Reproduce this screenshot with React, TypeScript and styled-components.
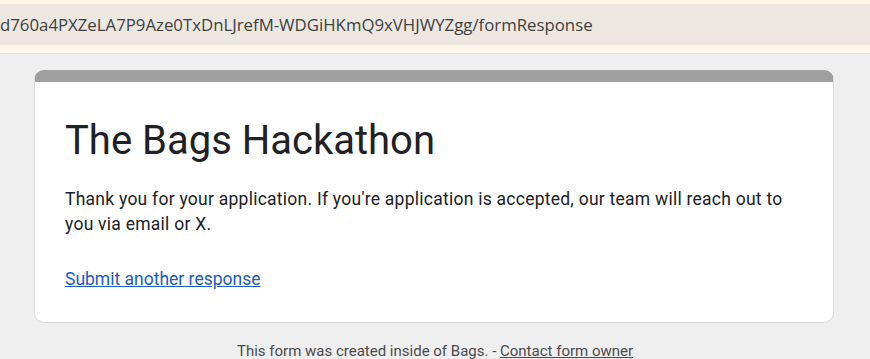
import React from "react";
import styled, { createGlobalStyle } from "styled-components";

const Global = createGlobalStyle`
  html, body { margin: 0; padding: 0; background: #efefef; }
  body { width: 870px; height: 359px; overflow: hidden; }
`;

const Page = styled.div`
  display: flex;
  flex-direction: column;
  width: 870px;
  height: 359px;
  overflow: hidden;
  background: #efefef;
`;

const AddressBand = styled.div`
  background: #fdf6e9;
  padding: 4px 0 8px 0;
  border-bottom: 1px solid #e8e2d8;
`;

const AddressBar = styled.div`
  height: 41px;
  display: flex;
  align-items: center;
  background: #ece8e1;
  font-family: "Open Sans", "Noto Sans", sans-serif;
  font-size: 16.8px;
  color: #404040;
  white-space: nowrap;
  overflow: hidden;
`;

const Main = styled.main`
  display: flex;
  flex-direction: column;
  align-items: flex-start;
  padding: 16px 0 0 34px;
`;

const Card = styled.section`
  width: 800px;
  box-sizing: border-box;
  background: #ffffff;
  border: 1px solid #dadce0;
  border-top: 12px solid #a0a0a0;
  border-radius: 10px;
  padding: 35px 30px 30px 30px;
  font-family: Roboto, "Liberation Sans", sans-serif;
`;

const Title = styled.h1`
  margin: 0;
  font-weight: 400;
  font-size: 40px;
  line-height: 48px;
  color: #202124;
`;

const Message = styled.p`
  margin: 22px 0 0 0;
  font-size: 17.5px;
  letter-spacing: 0.25px;
  line-height: 25px;
  color: #202124;
`;

const Link = styled.a`
  display: block;
  width: fit-content;
  margin-top: 30px;
  font-size: 17.5px;
  line-height: 25px;
  color: #1c5ac4;
  text-decoration: underline;
`;

const Footer = styled.footer`
  align-self: stretch;
  margin: 18px 0 0 -34px;
  text-align: center;
  font-family: Roboto, "Liberation Sans", sans-serif;
  font-size: 15px;
  line-height: 20px;
  color: #4a4a4a;
`;

const FooterLink = styled.a`
  color: #4a4a4a;
  text-decoration: underline;
`;

export default function App() {
  return (
    <>
      <Global />
      <Page>
        <AddressBand>
          <AddressBar>d760a4PXZeLA7P9Aze0TxDnLJrefM-WDGiHKmQ9xVHJWYZgg/formResponse</AddressBar>
        </AddressBand>
        <Main>
          <Card>
            <Title>The Bags Hackathon</Title>
            <Message>
              Thank you for your application. If you're application is accepted, our team will reach out to you via email or X.
            </Message>
            <Link href="#">Submit another response</Link>
          </Card>
          <Footer>
            This form was created inside of Bags. - <FooterLink href="#">Contact form owner</FooterLink>
          </Footer>
        </Main>
      </Page>
    </>
  );
}
